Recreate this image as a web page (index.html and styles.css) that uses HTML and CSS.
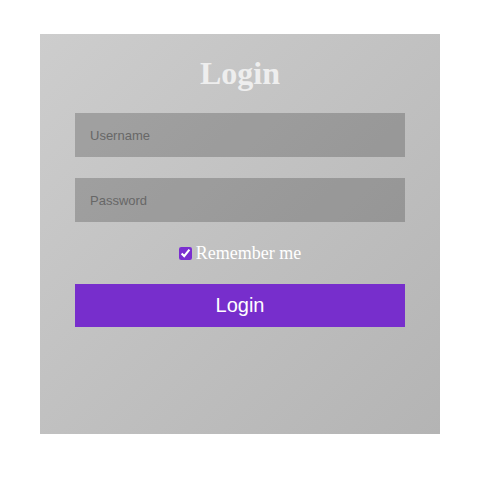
FILE: index.html
```html
<!DOCTYPE html>
<html>
<head>
<meta charset="utf-8">
<link rel="stylesheet" href="styles.css">
</head>
<body>
<form class="card">
  <h2 class="title">Login</h2>
  <input class="field" type="text" placeholder="Username">
  <input class="field" type="password" placeholder="Password">
  <label class="remember"><input type="checkbox" class="check" checked> Remember me</label>
  <button type="button" class="btn">Login</button>
</form>
</body>
</html>
```
FILE: styles.css
```css
html, body {
  margin: 0;
  padding: 0;
  background: #fff;
}
body {
  padding-top: 34px;
}
.card {
  width: 400px;
  height: 400px;
  margin: 0 auto;
  box-sizing: border-box;
  padding: 20px 35px 0;
  background: linear-gradient(135deg, #cdcdcd 0%, #b4b4b4 100%);
  display: flex;
  flex-direction: column;
  align-items: stretch;
}
.title {
  margin: 0 0 20px;
  font-family: "Liberation Serif", serif;
  font-weight: bold;
  font-size: 32px;
  line-height: 39px;
  color: #eeeeee;
  text-align: center;
}
.field {
  height: 44px;
  margin: 0 0 21px;
  border: none;
  outline: none;
  padding: 0 15px;
  background: rgba(0, 0, 0, 0.2);
  font-family: "Liberation Sans", Arial, sans-serif;
  font-size: 13px;
  color: #333;
}
.field::placeholder {
  color: #676767;
}
.remember {
  align-self: center;
  margin: 0 0 20px;
  display: flex;
  align-items: center;
  gap: 4px;
  font-family: "Liberation Serif", serif;
  font-size: 18px;
  color: #fff;
}
.check {
  margin: 0;
  width: 13px;
  height: 13px;
  accent-color: #7a2ed0;
}
.btn {
  height: 43px;
  border: none;
  background: #772ecc;
  color: #fff;
  font-family: "Liberation Sans", Arial, sans-serif;
  font-size: 20px;
  cursor: pointer;
}
```
